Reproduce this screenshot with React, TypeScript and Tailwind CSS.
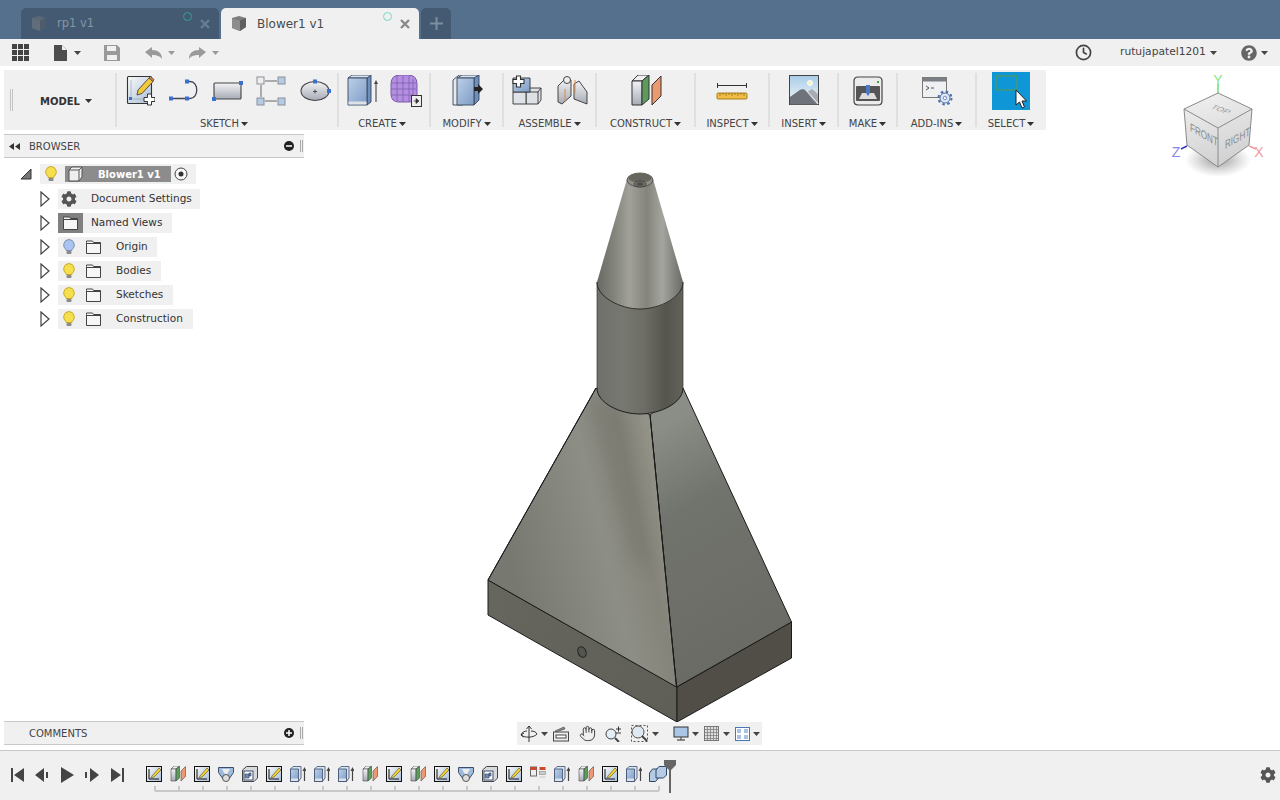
import { type ReactNode } from 'react';
import { Clock, Hand } from 'lucide-react';
import { FaCog, FaQuestionCircle } from 'react-icons/fa';

function Caret({ color = '#444' }: { color?: string }) {
  return (
    <svg width="7" height="4" viewBox="0 0 7 4" className="shrink-0">
      <path d="M0 0h7L3.5 4z" fill={color} />
    </svg>
  );
}

function Defs() {
  return (
    <svg className="absolute w-0 h-0">
      <defs>
        <linearGradient id="paper" x1="0" y1="0" x2="1" y2="1">
          <stop offset="0" stopColor="#fafafa" />
          <stop offset="1" stopColor="#a9bdd6" />
        </linearGradient>
        <linearGradient id="steel" x1="0" y1="0" x2="0" y2="1">
          <stop offset="0" stopColor="#f2f3f5" />
          <stop offset="1" stopColor="#a6abb5" />
        </linearGradient>
        <linearGradient id="blue" x1="0" y1="0" x2="1" y2="1">
          <stop offset="0" stopColor="#bcd0e8" />
          <stop offset="1" stopColor="#7d9cc6" />
        </linearGradient>
        <linearGradient id="sky" x1="0" y1="0" x2="0" y2="1">
          <stop offset="0" stopColor="#a9cde8" />
          <stop offset="1" stopColor="#f4f6f8" />
        </linearGradient>
        <linearGradient id="cone" x1="0" y1="0" x2="1" y2="0">
          <stop offset="0" stopColor="#686962" />
          <stop offset="0.2" stopColor="#83847c" />
          <stop offset="0.38" stopColor="#a2a199" />
          <stop offset="0.58" stopColor="#84847c" />
          <stop offset="0.76" stopColor="#a4a59e" />
          <stop offset="1" stopColor="#696a64" />
        </linearGradient>
        <linearGradient id="cyl" x1="0" y1="0" x2="1" y2="0">
          <stop offset="0" stopColor="#6f706a" />
          <stop offset="0.3" stopColor="#777870" />
          <stop offset="0.55" stopColor="#6d6d65" />
          <stop offset="0.8" stopColor="#56554d" />
          <stop offset="1" stopColor="#62625b" />
        </linearGradient>
        <linearGradient id="faceL" gradientUnits="userSpaceOnUse" x1="500" y1="520" x2="670" y2="480">
          <stop offset="0" stopColor="#777870" />
          <stop offset="0.28" stopColor="#82837b" />
          <stop offset="0.55" stopColor="#8d8e86" />
          <stop offset="0.78" stopColor="#85847a" />
          <stop offset="1" stopColor="#98978c" />
        </linearGradient>
        <linearGradient id="faceR" gradientUnits="userSpaceOnUse" x1="652" y1="430" x2="770" y2="640">
          <stop offset="0" stopColor="#8b8d87" />
          <stop offset="0.35" stopColor="#71736d" />
          <stop offset="1" stopColor="#6a6b64" />
        </linearGradient>
        <linearGradient id="sideL" gradientUnits="userSpaceOnUse" x1="488" y1="600" x2="677" y2="700">
          <stop offset="0" stopColor="#66665e" />
          <stop offset="1" stopColor="#5f5f58" />
        </linearGradient>
        <linearGradient id="cube" x1="0" y1="0" x2="0.3" y2="1">
          <stop offset="0" stopColor="#f2f2f2" />
          <stop offset="1" stopColor="#d2d2d2" />
        </linearGradient>
        <radialGradient id="shadow">
          <stop offset="0" stopColor="#777" stopOpacity="0.75" />
          <stop offset="1" stopColor="#999" stopOpacity="0" />
        </radialGradient>
        <filter id="soft">
          <feGaussianBlur stdDeviation="7" />
        </filter>
        <clipPath id="leftFace">
          <path d="M488 580L596 388 650 415 676.500 687z" />
        </clipPath>
      </defs>
    </svg>
  );
}

function SmallCube({ light }: { light?: boolean }) {
  return (
    <svg width="16" height="17" viewBox="0 0 16 17" className={light ? 'opacity-40' : ''}>
      <path d="M1 3l7-2 7 2v9l-6 4-8-3z" fill="#7d7d7d" />
      <path d="M1 3l8 2.500 6-2.500v9l-6 4z" fill="#5f5f5f" />
      <path d="M9 5.500v10.500l-8-3V3z" fill="#8d8d8d" />
    </svg>
  );
}

function TabClose({ color }: { color: string }) {
  return (
    <svg width="10" height="10" viewBox="0 0 10 10">
      <path d="M1 1l8 8M9 1l-8 8" stroke={color} strokeWidth="2.400" />
    </svg>
  );
}

function DocTab({ name, active }: { name: string; active?: boolean }) {
  return (
    <div className={active ? 'relative flex items-center w-[198px] h-[31px] rounded-t-[5px] bg-[#f0f0f0]' : 'relative flex items-center w-[198px] h-[31px] rounded-t-[5px] bg-[#435a72]'}>
      <div className="ml-[10px] w-[26px]">
        <SmallCube light={!active} />
      </div>
      <span className={active ? 'text-[12px] font-medium text-[#4a4a4a]' : 'text-[11.500px] text-[#8795a4]'}>{name}</span>
      <span className={active ? 'absolute left-[162px] top-[4px] w-[9px] h-[9px] rounded-full border border-[#7fd3c2]' : 'absolute left-[162px] top-[4px] w-[9px] h-[9px] rounded-full border border-[#3f9c90]'} />
      <span className="absolute left-[179px] top-[11px] flex">
        <TabClose color={active ? '#8a8a8a' : '#6b7d90'} />
      </span>
    </div>
  );
}

function SketchBig() {
  return (
    <svg width="32" height="32" viewBox="0 0 32 32">
      <rect x="4.500" y="1.500" width="24" height="27" rx="1" fill="url(#paper)" stroke="#333" strokeWidth="1.100" />
      <path d="M8 5v19h18" fill="none" stroke="#9aa" strokeWidth="0.700" />
      <path d="M15 15L26 3l4 3.500-11 12-5 1.500z" fill="#f3c93a" stroke="#444" strokeWidth="0.900" />
      <path d="M26 3l1.500-1.500 3.500 3-1 2z" fill="#d98a4a" stroke="#444" strokeWidth="0.800" />
      <rect x="6" y="22" width="3" height="3" fill="#3d6fd0" />
      <path d="M21 22.500h3.500V19h4v3.500H32v4h-3.500V30h-4v-3.500H21z" fill="#fff" stroke="#333" strokeWidth="1" />
    </svg>
  );
}

function LineIcon() {
  return (
    <svg width="32" height="32" viewBox="0 0 32 32">
      <path d="M4 23.500h16M20 6.500h3c9 0 9 17 0 17h-3" fill="none" stroke="#445" strokeWidth="1.300" />
      <rect x="2" y="21.500" width="4" height="4" fill="#3d6fd0" />
      <rect x="18" y="21.500" width="4" height="4" fill="#3d6fd0" />
      <rect x="18" y="4.500" width="4" height="4" fill="#3d6fd0" />
    </svg>
  );
}

function RectIcon() {
  return (
    <svg width="32" height="32" viewBox="0 0 32 32">
      <rect x="3" y="8" width="27" height="16" rx="1" fill="url(#steel)" stroke="#444" strokeWidth="1.100" />
      <rect x="28" y="6" width="4" height="4" fill="#3d6fd0" />
      <rect x="1" y="22" width="4" height="4" fill="#3d6fd0" />
    </svg>
  );
}

function PatternIcon() {
  return (
    <svg width="32" height="32" viewBox="0 0 32 32">
      <path d="M10 6h12M6 10v12M10 26h12" stroke="#666" strokeWidth="1" />
      <rect x="2" y="2" width="7" height="7" fill="#eee" stroke="#8a8f98" />
      <rect x="23" y="2" width="7" height="7" fill="#b5cbe4" stroke="#8a8f98" />
      <rect x="2" y="23" width="7" height="7" fill="#b5cbe4" stroke="#8a8f98" />
      <rect x="23" y="23" width="7" height="7" fill="#b5cbe4" stroke="#8a8f98" />
    </svg>
  );
}

function EllipseIcon() {
  return (
    <svg width="32" height="32" viewBox="0 0 32 32">
      <ellipse cx="16" cy="16" rx="14" ry="9.500" fill="url(#steel)" stroke="#444" strokeWidth="1.100" />
      <path d="M14 16.500h4M16 14.500v4" stroke="#333" strokeWidth="0.800" />
      <rect x="14" y="4.500" width="4" height="4" fill="#3d6fd0" />
      <rect x="28" y="14" width="4" height="4" fill="#3d6fd0" />
    </svg>
  );
}

function BoxBig() {
  return (
    <svg width="32" height="32" viewBox="0 0 32 32">
      <path d="M21 3l4-3v27l-4 3z" fill="#6f8fbd" stroke="#38465c" strokeWidth="0.900" />
      <path d="M2 3l4-3h19l-4 3z" fill="#dbe5f2" stroke="#38465c" strokeWidth="0.900" />
      <path d="M2 3h19v27H2z" fill="url(#blue)" stroke="#38465c" strokeWidth="0.900" />
      <path d="M2.500 26.500h18v3h-18z" fill="#dfe2e6" />
      <path d="M30 27V7" stroke="#444" strokeWidth="1.100" />
      <path d="M28 9l2-4 2 4z" fill="#444" />
    </svg>
  );
}

function MeshIcon() {
  return (
    <svg width="32" height="32" viewBox="0 0 32 32">
      <path d="M1 9q0-9 9-9h8q9 0 9 9v10q0 8-8 8H9q-8 0-8-8z" fill="#b48ee0" stroke="#7a5aa8" />
      <path d="M1 8h25M1 14h25M1 20h22M7 1v25M13 1v26M19 1v26M23 4v16" stroke="#7f5fb0" strokeWidth="0.800" fill="none" />
      <rect x="21.500" y="20.500" width="10" height="11" fill="#eee" stroke="#333" />
      <path d="M23.500 26h3M26 23.500l3 2.500-3 2.500z" fill="#333" stroke="#333" strokeWidth="0.700" />
    </svg>
  );
}

function ModifyIcon() {
  return (
    <svg width="32" height="32" viewBox="0 0 32 32">
      <path d="M2 5l6-5h4v30H2z" fill="#e6e8eb" stroke="#38465c" strokeWidth="0.900" />
      <path d="M23 3l5-3v25l-5 5z" fill="#6f8fbd" stroke="#38465c" strokeWidth="0.900" />
      <path d="M6 3l5-3h17l-5 3z" fill="#dbe5f2" stroke="#38465c" strokeWidth="0.900" />
      <path d="M6 3h17v27H6z" fill="url(#blue)" stroke="#38465c" strokeWidth="0.900" />
      <path d="M23 12h4V9l5 5-5 5v-3h-4z" fill="#222" />
    </svg>
  );
}

function JoinIcon() {
  return (
    <svg width="32" height="32" viewBox="0 0 32 32">
      <path d="M14 17l4-4h11v12l-3 4H14z" fill="#dde0e4" stroke="#333" strokeWidth="0.900" />
      <path d="M14 17h12v12M26 17l3-4" fill="none" stroke="#333" strokeWidth="0.900" />
      <path d="M1 17h13v12H1z" fill="#dfe2e6" stroke="#333" strokeWidth="0.900" />
      <path d="M1 3h17v14H1z" fill="url(#blue)" stroke="#333" strokeWidth="0.900" />
      <path d="M1 4.500h3.500V1h4v3.500H12v4H8.500V12h-4V8.500H1z" fill="#fff" stroke="#333" strokeWidth="1.100" />
    </svg>
  );
}

function JointIcon() {
  return (
    <svg width="32" height="32" viewBox="0 0 32 32">
      <path d="M2 27V11l7-7 6 1v16l-9 8z" fill="url(#steel)" stroke="#333" strokeWidth="0.900" />
      <path d="M18 24V9l5-3 8 11v12z" fill="url(#steel)" stroke="#333" strokeWidth="0.900" />
      <ellipse cx="11" cy="5" rx="3.500" ry="3.500" fill="#eee" stroke="#333" strokeWidth="0.900" />
      <path d="M19 5v13" stroke="#e08a3c" />
      <path d="M9 14v12" stroke="#e08a3c" />
    </svg>
  );
}

function PlanesIcon({ s = 32 }: { s?: number }) {
  return (
    <svg width={s} height={s} viewBox="0 0 32 32">
      <path d="M2 6l6-6h11l-7 6z" fill="#eef0f2" stroke="#333" strokeWidth="1" />
      <path d="M2 6h10v24H2z" fill="url(#steel)" stroke="#333" strokeWidth="1" />
      <path d="M12 6l7-6v24l-7 6z" fill="#5e9a5c" stroke="#333" strokeWidth="1" />
      <path d="M22 10l9-9v20l-9 9z" fill="#ea9a6e" stroke="#333" strokeWidth="1" />
    </svg>
  );
}

function RulerIcon() {
  return (
    <svg width="32" height="32" viewBox="0 0 32 32">
      <path d="M1.500 8v5M1.500 10.500h29M30.500 8v5" stroke="#333" strokeWidth="1" fill="none" />
      <rect x="1" y="18" width="30" height="6" rx="1" fill="#f0bd45" stroke="#a87e1e" strokeWidth="1" />
      <path d="M4 18v3M7 18v2M10 18v3M13 18v2M16 18v3M19 18v2M22 18v3M25 18v2M28 18v3" stroke="#7a5b14" strokeWidth="0.600" />
    </svg>
  );
}

function PictureIcon() {
  return (
    <svg width="32" height="32" viewBox="0 0 32 32">
      <rect x="1.500" y="0.500" width="29" height="29" fill="url(#sky)" stroke="#444" />
      <path d="M2 22l10-7q4-3 7 2l5-3 6 5v8.500H2z" fill="#a8adb4" />
      <path d="M2 22l10-7q3-2 6 1l7 9 5 4.500H2z" fill="#6e727a" />
      <path d="M18 15l12 13.500" stroke="#eee" />
      <circle cx="22" cy="8" r="2.500" fill="#f8efc0" stroke="#fff" />
    </svg>
  );
}

function MakeIcon() {
  return (
    <svg width="32" height="32" viewBox="0 0 32 32">
      <path d="M2 6q0-4 4-4h20q4 0 4 4v20q0 4-4 4H6q-4 0-4-4z" fill="#ececec" stroke="#444" strokeWidth="1.200" />
      <rect x="4" y="11" width="24" height="15" rx="1" fill="#555" />
      <path d="M7 24l3-6h12l3 6z" fill="#ddd" />
      <path d="M14 10h4v8l-2 3-2-3z" fill="#4a78c8" />
      <rect x="25" y="6" width="2" height="2" fill="#3aa64a" />
    </svg>
  );
}

function AddInIcon() {
  return (
    <svg width="32" height="32" viewBox="0 0 32 32">
      <rect x="1.500" y="2.500" width="24" height="20" fill="#eef0f2" stroke="#777" />
      <rect x="1.500" y="2.500" width="24" height="4" fill="#7a7f86" />
      <path d="M5 11l3 2-3 2M10 13h3" stroke="#444" fill="none" strokeWidth="0.900" />
      <circle cx="24" cy="23" r="6.500" fill="none" stroke="#4d6fa8" strokeWidth="2" strokeDasharray="2.500 2.600" />
      <circle cx="24" cy="23" r="5" fill="#dfe8f4" stroke="#4d6fa8" />
      <circle cx="24" cy="23" r="1.800" fill="#f0f0f0" stroke="#4d6fa8" strokeWidth="0.700" />
    </svg>
  );
}

function SelectIcon() {
  return (
    <svg width="38" height="38" viewBox="0 0 38 38">
      <rect width="38" height="38" fill="#0e96d6" />
      <rect x="4" y="4" width="21" height="14" fill="none" stroke="#5c9a3e" strokeWidth="1" />
      <path d="M24 18v15l3.500-3 2.500 6 2.500-1-2.500-6h4.500z" fill="#fff" stroke="#222" strokeWidth="1" />
    </svg>
  );
}

function Group({ width, label, labelClass = '', last, children }: { width: string; label: string; labelClass?: string; last?: boolean; children: ReactNode }) {
  return (
    <div className={`${width} relative flex flex-col items-center h-full`}>
      <div className="flex items-center h-[32px] mt-[5px] gap-[12px]">{children}</div>
      <div className={`mt-[10px] flex items-center gap-[2px] text-[10px] leading-[13px] text-[#444] ${labelClass}`}>
        {label}
        <Caret color="#333" />
      </div>
      {!last && <span className="absolute right-[-1px] top-[3px] bottom-[3px] w-[2px] bg-[#e0e0e0]" />}
    </div>
  );
}

function Toolbar() {
  return (
    <div className="flex h-[60px] w-[1042px] ml-[4px] mt-[4px] bg-[#f0f0f0]">
      <div className="relative flex items-center w-[112px] h-full">
        <span className="ml-[6px] w-[3px] h-[22px] border-x border-[#c4c4c4]" />
        <span className="ml-[27px] mt-[3px] text-[10px] font-bold text-[#333]">MODEL</span>
        <span className="ml-[5px] mt-[1px]">
          <Caret color="#333" />
        </span>
        <span className="absolute right-[-1px] top-[3px] bottom-[3px] w-[2px] bg-[#e0e0e0]" />
      </div>
      <Group width="w-[222px]" label="SKETCH" labelClass="-ml-[6px]">
        <SketchBig />
        <LineIcon />
        <RectIcon />
        <PatternIcon />
        <EllipseIcon />
      </Group>
      <Group width="w-[92px]" label="CREATE" labelClass="-ml-[4px]">
        <BoxBig />
        <MeshIcon />
      </Group>
      <Group width="w-[73px]" label="MODIFY">
        <ModifyIcon />
      </Group>
      <Group width="w-[93px]" label="ASSEMBLE">
        <JoinIcon />
        <JointIcon />
      </Group>
      <Group width="w-[99px]" label="CONSTRUCT">
        <PlanesIcon />
      </Group>
      <Group width="w-[74px]" label="INSPECT">
        <RulerIcon />
      </Group>
      <Group width="w-[69px]" label="INSERT">
        <PictureIcon />
      </Group>
      <Group width="w-[59px]" label="MAKE">
        <MakeIcon />
      </Group>
      <Group width="w-[79px]" label="ADD-INS">
        <AddInIcon />
      </Group>
      <Group width="w-[70px]" label="SELECT" last>
        <SelectIcon />
      </Group>
    </div>
  );
}

function QuickBar() {
  return (
    <div className="flex items-center h-[27px] bg-[#f0f0f0]">
      <svg width="17" height="17" viewBox="0 0 17 17" className="ml-[12px]">
        <path d="M0 0h5v5H0zM6 0h5v5H6zM12 0h5v5h-5zM0 6h5v5H0zM6 6h5v5H6zM12 6h5v5h-5zM0 12h5v5H0zM6 12h5v5H6zM12 12h5v5h-5z" fill="#444" />
      </svg>
      <svg width="13" height="16" viewBox="0 0 13 16" className="ml-[25px]">
        <path d="M0 0h8l5 5v11H0z" fill="#4d4d4d" />
        <path d="M8 0v5h5" fill="#f0f0f0" />
      </svg>
      <span className="ml-[7px]">
        <Caret />
      </span>
      <svg width="16" height="16" viewBox="0 0 16 16" className="ml-[23px]">
        <path d="M0 0h13l3 3v13H0z" fill="#9a9a9a" />
        <rect x="3" y="1" width="9" height="5" fill="#f0f0f0" />
        <rect x="3" y="10" width="10" height="5" fill="#f0f0f0" />
      </svg>
      <svg width="17" height="12" viewBox="0 0 17 12" className="ml-[25px]">
        <path d="M0 5l7-5v3c6 0 10 3 10 9-2-3-5-4-10-4v3z" fill="#9a9a9a" />
      </svg>
      <span className="ml-[6px]">
        <Caret color="#9a9a9a" />
      </span>
      <svg width="17" height="12" viewBox="0 0 17 12" className="ml-[14px]">
        <path d="M17 5l-7-5v3C4 3 0 6 0 12c2-3 5-4 10-4v3z" fill="#9a9a9a" />
      </svg>
      <span className="ml-[6px]">
        <Caret color="#9a9a9a" />
      </span>
      <Clock size={17} strokeWidth={2.400} color="#444" className="ml-[856px]" />
      <span className="ml-[28px] text-[10.700px] text-[#444]">rutujapatel1201</span>
      <span className="ml-[4px]">
        <Caret />
      </span>
      <FaQuestionCircle size={16} color="#666" className="ml-[24px]" />
      <span className="ml-[4px]">
        <Caret />
      </span>
    </div>
  );
}

function Bulb({ blue }: { blue?: boolean }) {
  return (
    <svg width="12" height="16" viewBox="0 0 12 16">
      <path d="M6 .500a5.500 5.500 0 0 1 3 10v1H3v-1a5.500 5.500 0 0 1 3-10z" fill={blue ? '#a9c4f0' : '#f6df4d'} stroke={blue ? '#7f8fb0' : '#c8a92a'} />
      <rect x="3.500" y="12" width="5" height="3" rx="1" fill="#8a8a8a" />
    </svg>
  );
}

function Folder() {
  return (
    <svg width="15" height="14" viewBox="0 0 15 14">
      <path d="M.500 2.500v-1.500h6l1 1.500h7v11H.500z" fill="#f6f6f6" stroke="#444" />
      <path d="M.500 3.500h14" stroke="#444" />
    </svg>
  );
}

function Expand() {
  return (
    <svg width="10" height="16" viewBox="0 0 10 16" className="shrink-0 ml-[1px]">
      <path d="M1 1l8 7-8 7z" fill="#fff" stroke="#444" strokeWidth="1.200" />
    </svg>
  );
}

const folderRows = [
  { name: 'Origin', width: 'w-[99px]', blue: true },
  { name: 'Bodies', width: 'w-[103px]', blue: false },
  { name: 'Sketches', width: 'w-[115px]', blue: false },
  { name: 'Construction', width: 'w-[135px]', blue: false },
];

function BrowserTree() {
  return (
    <div className="flex flex-col gap-[4px] mt-[6px] text-[10.500px] text-[#333]">
      <div className="flex items-center h-[20px] mb-[1px]">
        <svg width="12" height="12" viewBox="0 0 12 12" className="ml-[16px]">
          <path d="M11 1v10H1z" fill="#777" stroke="#333" />
        </svg>
        <div className="flex items-center ml-[8px] h-[20px] w-[156px] bg-[#f0f0f0]">
          <span className="ml-[5px]">
            <Bulb />
          </span>
          <div className="flex items-center ml-[8px] w-[106px] h-[16px] bg-[#8c8c8c]">
            <svg width="16" height="16" viewBox="0 0 16 16" className="ml-[3px]">
              <path d="M1 4l3-3h10v10l-3 4H1z" fill="#eee" stroke="#555" />
              <path d="M1 4h10v11M11 4l3-3" fill="none" stroke="#555" />
            </svg>
            <span className="ml-[14px] text-[10px] font-bold text-white">Blower1 v1</span>
          </div>
          <svg width="14" height="14" viewBox="0 0 14 14" className="ml-[3px]">
            <circle cx="7" cy="7" r="6" fill="#f8f8f8" stroke="#444" />
            <circle cx="7" cy="7" r="2.500" fill="#333" />
          </svg>
        </div>
      </div>
      <div className="flex items-center h-[20px] pl-[35px]">
        <Expand />
        <div className="flex items-center ml-[8px] h-[20px] w-[142px] bg-[#f0f0f0]">
          <FaCog size={16} color="#555" className="ml-[3px]" />
          <span className="ml-[14px]">Document Settings</span>
        </div>
      </div>
      <div className="flex items-center h-[20px] pl-[35px]">
        <Expand />
        <div className="flex items-center ml-[8px] h-[20px] w-[114px] bg-[#f0f0f0]">
          <span className="flex items-center justify-center w-[25px] h-[20px] bg-[#808080]">
            <Folder />
          </span>
          <span className="ml-[8px]">Named Views</span>
        </div>
      </div>
      {folderRows.map((row) => (
        <div key={row.name} className="flex items-center h-[20px] pl-[35px]">
          <Expand />
          <div className={`flex items-center ml-[8px] h-[20px] bg-[#f0f0f0] ${row.width}`}>
            <span className="ml-[5px] flex">
              <Bulb blue={row.blue} />
            </span>
            <span className="ml-[11px] flex">
              <Folder />
            </span>
            <span className="ml-[15px]">{row.name}</span>
          </div>
        </div>
      ))}
    </div>
  );
}

function PanelHead({ title, collapse, icon }: { title: string; collapse?: boolean; icon: ReactNode }) {
  return (
    <div className="flex items-center h-[24px] bg-[#f0f0f0] border border-[#c8c8c8] border-x-0 text-[10px] text-[#444]">
      <span className="w-[25px] pl-[5px] flex">
        {collapse && (
          <svg width="11" height="7" viewBox="0 0 11 7">
            <path d="M5 0v7L0 3.500zM11 0v7L6 3.500z" fill="#333" />
          </svg>
        )}
      </span>
      {title}
      <span className="ml-auto mr-[1px] flex items-center gap-[6px]">
        {icon}
        <span className="w-[3px] h-[12px] border-x border-[#aaa]" />
      </span>
    </div>
  );
}

function RoundBtn({ plus }: { plus?: boolean }) {
  return (
    <svg width="10" height="10" viewBox="0 0 10 10">
      <circle cx="5" cy="5" r="5" fill="#222" />
      <path d={plus ? 'M2 5h6M5 2v6' : 'M2 5h6'} stroke="#fff" strokeWidth="1.500" />
    </svg>
  );
}

function BlowerModel() {
  return (
    <svg width="320" height="560" viewBox="480 165 320 560" className="absolute left-[480px] top-[35px]">
      <g stroke="#1b1b1b" strokeWidth="1" strokeLinejoin="round">
        <path d="M488 580V615L677 722V687z" fill="url(#sideL)" />
        <path d="M677 687V722L791.500 658V622z" fill="#504e47" />
        <path d="M650 415L683 388 791.500 622 676.500 687z" fill="url(#faceR)" />
        <path d="M488 580L596 388 650 415 676.500 687z" fill="url(#faceL)" />
        <g clipPath="url(#leftFace)">
          <path d="M585 395L625 410 652 570 632 560z" fill="#6b6b63" stroke="none" opacity="0.300" filter="url(#soft)" />
        </g>
        <path d="M488 580L596 388M650 415L676.500 687" fill="none" />
        <ellipse cx="582" cy="652" rx="4" ry="5.500" transform="rotate(-22 582 652)" fill="#55554f" stroke="#222" />
        <path d="M597 282V388C597 403 620 414 640 414S683 403 683 388V282z" fill="url(#cyl)" stroke="none" />
        <path d="M597 388C597 403 620 414 640 414S683 403 683 388" fill="none" />
        <path d="M597 282V388M683 282V388" fill="none" strokeWidth="0.700" stroke="#333" />
        <path d="M597 282L627 179H653L683 282C683 297 662 309 640 309S597 297 597 282z" fill="url(#cone)" stroke="none" />
        <path d="M597 282C597 297 620 309 640 309S683 297 683 282" fill="none" strokeWidth="0.800" />
        <ellipse cx="640" cy="180" rx="13" ry="7" fill="#8e8e86" stroke="#444" strokeWidth="0.800" />
        <ellipse cx="640" cy="178" rx="11.500" ry="4.500" fill="#66665f" stroke="none" />
        <ellipse cx="640" cy="184" rx="6" ry="3" fill="#6f6f68" stroke="#333" strokeWidth="0.600" />
        <ellipse cx="640" cy="184" rx="3" ry="1.500" fill="#4a4a44" stroke="none" />
      </g>
    </svg>
  );
}

function ViewCube() {
  return (
    <svg width="105" height="115" viewBox="1165 70 105 115" className="absolute left-[1165px] top-[70px] font-['Liberation_Sans',sans-serif]">
      <ellipse cx="1218" cy="160" rx="33" ry="17" fill="url(#shadow)" />
      <path d="M1218 93V84" stroke="#6fdc6f" strokeWidth="1.500" />
      <path d="M1187 146l-6 3" stroke="#3535c8" strokeWidth="1.500" />
      <path d="M1249 146l7 3" stroke="#f09a9a" strokeWidth="1.500" />
      <text x="1218" y="85" textAnchor="middle" fontSize="14" fill="#86e886">Y</text>
      <text x="1176" y="157" textAnchor="middle" fontSize="14" fill="#8686f0">Z</text>
      <text x="1259" y="157" textAnchor="middle" fontSize="14" fill="#f29a9a">X</text>
      <path d="M1218 93L1252 109 1249 145 1218 167 1187 145 1184 109z" fill="url(#cube)" stroke="#8a8a8a" />
      <path d="M1184 109L1218 128 1252 109M1218 128V167" fill="none" stroke="#8a8a8a" />
      <text transform="matrix(.95 .35 -.7 .55 1210 108)" fontSize="9" fill="#999">TOP</text>
      <text transform="matrix(.9 .5 0 1.300 1190 131)" fontSize="9" fill="#8a8a8a">FRONT</text>
      <text transform="matrix(.9 -.5 0 1.300 1225 149)" fontSize="9" fill="#8a8a8a">RIGHT</text>
    </svg>
  );
}

function NavBar() {
  return (
    <div className="absolute z-10 left-[517px] top-[592px] flex items-center w-[245px] h-[23px] bg-[#f0f0f0]">
      <svg width="18" height="18" viewBox="0 0 18 18" className="ml-[3px]">
        <path d="M9 1v16M6.500 4L9 1l2.500 3M1 10c3 3 13 3 16-1M1 10c1-3 4-4 6-4M11 6c3 0 5 1 6 3M4 12l-3-2 3-2" fill="none" stroke="#333" />
      </svg>
      <span className="ml-[3px]">
        <Caret />
      </span>
      <svg width="16" height="16" viewBox="0 0 16 16" className="ml-[5px]">
        <rect x=".5" y="6" width="15" height="9" fill="#eee" stroke="#444" />
        <rect x="3" y="9" width="10" height="3" fill="#fff" stroke="#444" />
        <path d="M2 5l9-4 1 2-9 3z" fill="#888" stroke="#444" strokeWidth=".6" />
      </svg>
      <Hand size={17} strokeWidth={1.300} color="#333" className="ml-[10px]" />
      <svg width="17" height="17" viewBox="0 0 17 17" className="ml-[9px]">
        <circle cx="6" cy="9" r="5" fill="#e6eef5" stroke="#444" />
        <path d="M10 13l4 4" stroke="#444" strokeWidth="2" />
        <path d="M11 4h5M13.500 1.500v5M11 8h5" stroke="#333" />
      </svg>
      <svg width="17" height="17" viewBox="0 0 17 17" className="ml-[9px]">
        <rect x=".5" y=".5" width="16" height="16" fill="none" stroke="#555" strokeDasharray="2 2" />
        <circle cx="7" cy="7" r="6" fill="#dfe9f2" stroke="#555" />
        <path d="M11 11l5 5" stroke="#444" strokeWidth="2" />
      </svg>
      <span className="ml-[4px]">
        <Caret />
      </span>
      <svg width="16" height="16" viewBox="0 0 16 16" className="ml-[14px]">
        <rect x="1" y="1" width="14" height="10" fill="#a9c6e6" stroke="#333" />
        <path d="M4 14h8M8 11v3" stroke="#666" strokeWidth="1.500" />
      </svg>
      <span className="ml-[3px]">
        <Caret />
      </span>
      <svg width="15" height="15" viewBox="0 0 15 15" className="ml-[5px]">
        <rect x=".5" y=".5" width="14" height="14" fill="#ddd" stroke="#777" />
        <path d="M3.500 0v15M6.500 0v15M9.500 0v15M12.500 0v15M0 3.500h15M0 6.500h15M0 9.500h15M0 12.500h15" stroke="#777" strokeWidth=".7" />
      </svg>
      <span className="ml-[4px]">
        <Caret />
      </span>
      <svg width="15" height="14" viewBox="0 0 15 14" className="ml-[5px]">
        <rect x=".5" y=".5" width="14" height="13" fill="#fff" stroke="#4b76b3" />
        <path d="M2 2h4v4H2zM9 2h4v4H9zM2 8h4v4H2zM9 8h4v4H9z" fill="#a9c2e4" />
      </svg>
      <span className="ml-[3px]">
        <Caret />
      </span>
    </div>
  );
}

function TlSketch() {
  return (
    <svg width="16" height="16" viewBox="0 0 16 16">
      <rect x=".5" y=".5" width="15" height="15" fill="url(#paper)" stroke="#111" />
      <path d="M3 3v10h10" fill="none" stroke="#111" />
      <path d="M6 10l7-8 2 2-7 7-3 1z" fill="#f5d328" stroke="#333" strokeWidth=".5" />
    </svg>
  );
}

function TlExtrude() {
  return (
    <svg width="16" height="16" viewBox="0 0 16 16">
      <path d="M.500 3l2.500-2.500h8V12L8.500 15.500H.500z" fill="#dbe5f2" stroke="#3c4e6c" strokeWidth=".8" />
      <path d="M.500 3h8v12.500h-8z" fill="url(#blue)" stroke="#3c4e6c" strokeWidth=".8" />
      <path d="M1 12.500h7v2.500H1z" fill="#dfe2e6" />
      <path d="M14.500 15V4" stroke="#444" strokeWidth="1.200" />
      <path d="M12.500 5l2-4 2 4z" fill="#444" />
    </svg>
  );
}

function TlLoft() {
  return (
    <svg width="16" height="16" viewBox="0 0 16 16">
      <path d="M.500 1.500h15v5L11 13H5L.500 6.500z" fill="#9fbbdc" stroke="#3c4e6c" />
      <path d="M4 3l4 7 4-7z" fill="#eee" />
      <circle cx="8" cy="12" r="3.500" fill="#ddd" stroke="#555" />
    </svg>
  );
}

function TlFace() {
  return (
    <svg width="16" height="16" viewBox="0 0 16 16">
      <path d="M.500 4l4-3.500h11V12l-3.500 3.500H.500z" fill="#d8dadd" stroke="#444" />
      <rect x="2" y="5" width="9" height="9" fill="#fff" stroke="#3c4e6c" />
      <path d="M3 8h4v4H3z M7 7h2v3H7z" fill="#6f8db8" stroke="#3c4e6c" strokeWidth=".7" />
    </svg>
  );
}

function TlPattern() {
  return (
    <svg width="16" height="16" viewBox="0 0 16 16">
      <rect x=".5" y="1" width="6" height="9" fill="#eee" stroke="#666" />
      <rect x=".5" y="1" width="6" height="3" fill="#d2472a" />
      <rect x="9.500" y="1" width="6" height="3" fill="#d2472a" />
      <rect x="9.500" y="5.500" width="6" height="3" fill="#ccc" stroke="#777" strokeWidth=".5" />
      <rect x="9.500" y="10" width="6" height="2" fill="#ddd" />
      <rect x="9.500" y="13" width="6" height="2" fill="#eee" />
    </svg>
  );
}

function TlCombine() {
  return (
    <svg width="18" height="16" viewBox="0 0 18 16">
      <path d="M.500 7l3-4h6v9l-3 3.500H.500z" fill="#b5cbe4" stroke="#2f4468" />
      <path d="M7 4l3-3.500h7.500V9l-3 3H7z" fill="#b5cbe4" stroke="#2f4468" />
    </svg>
  );
}

const features = ['sketch', 'plane', 'sketch', 'loft', 'face', 'sketch', 'extrude', 'extrude', 'extrude', 'plane', 'sketch', 'plane', 'sketch', 'loft', 'face', 'sketch', 'pattern', 'extrude', 'plane', 'sketch', 'extrude', 'combine'];

function Feature({ kind }: { kind: string }) {
  if (kind === 'sketch') return <TlSketch />;
  if (kind === 'plane') return <PlanesIcon s={16} />;
  if (kind === 'loft') return <TlLoft />;
  if (kind === 'face') return <TlFace />;
  if (kind === 'pattern') return <TlPattern />;
  if (kind === 'combine') return <TlCombine />;
  return <TlExtrude />;
}

function Timeline() {
  return (
    <div className="relative flex h-[50px] bg-[#f0f0f0] border-t border-[#c8c8c8]">
      <div className="flex items-center h-[47px] pl-[11px] w-[142px] gap-[11px]">
        <svg width="13" height="14" viewBox="0 0 13 14">
          <path d="M0 0h2v14H0zM13 0v14L3 7z" fill="#444" />
        </svg>
        <svg width="14" height="14" viewBox="0 0 14 14">
          <path d="M9 0v14L0 7zM11 4h2v6h-2z" fill="#444" />
        </svg>
        <svg width="13" height="16" viewBox="0 0 13 16" className="ml-[1px]">
          <path d="M0 0l13 8-13 8z" fill="#444" />
        </svg>
        <svg width="14" height="14" viewBox="0 0 14 14">
          <path d="M5 0v14l9-7zM0 4h2v6H0z" fill="#444" />
        </svg>
        <svg width="13" height="14" viewBox="0 0 13 14" className="ml-[1px]">
          <path d="M11 0h2v14h-2zM0 0v14l10-7z" fill="#444" />
        </svg>
      </div>
      <div className="flex h-full">
        {features.map((kind, i) => (
          <div key={i} className="relative flex flex-col items-center w-[24px]">
            <div className="flex items-center justify-center h-[16px] mt-[15px]">
              <Feature kind={kind} />
            </div>
            <span className="mt-[4px] ml-[2px] w-[2px] h-[5px] bg-[#c8c8c8]" />
            <span className={i === 0 ? 'absolute top-[39px] left-[13px] right-0 h-[2px] bg-[#c8c8c8]' : i === features.length - 1 ? 'absolute top-[39px] left-0 right-[11px] h-[2px] bg-[#c8c8c8]' : 'absolute top-[39px] left-0 right-0 h-[2px] bg-[#c8c8c8]'} />
          </div>
        ))}
      </div>
      <svg width="12" height="33" viewBox="0 0 12 33" className="absolute left-[664px] top-[9px]">
        <path d="M0 0h12v5L7 10v23H5V10L0 5z" fill="#666" />
      </svg>
      <FaCog size={16} color="#555" className="absolute right-[4px] top-[16px]" />
    </div>
  );
}

export default function App() {
  return (
    <div className="relative flex flex-col w-[1280px] h-[800px] overflow-hidden bg-white font-['DejaVu_Sans',sans-serif]">
      <Defs />
      <div className="flex items-end gap-[2px] h-[39px] pl-[21px] bg-[#54708d]">
        <DocTab name="rp1 v1" />
        <DocTab name="Blower1 v1" active />
        <div className="flex items-center justify-center w-[30px] h-[31px] rounded-t-[5px] bg-[#435a72]">
          <svg width="13" height="13" viewBox="0 0 13 13">
            <path d="M6.500 0v13M0 6.500h13" stroke="#7d8ea0" strokeWidth="2" />
          </svg>
        </div>
      </div>
      <QuickBar />
      <Toolbar />
      <main className="relative flex-1 min-h-0">
        <BlowerModel />
        <NavBar />
        <div className="flex flex-col justify-between w-[300px] h-full ml-[4px] pt-[4px] pb-[5px]">
          <div>
            <PanelHead title="BROWSER" collapse icon={<RoundBtn />} />
            <BrowserTree />
          </div>
          <PanelHead title="COMMENTS" icon={<RoundBtn plus />} />
        </div>
      </main>
      <Timeline />
      <ViewCube />
    </div>
  );
}
